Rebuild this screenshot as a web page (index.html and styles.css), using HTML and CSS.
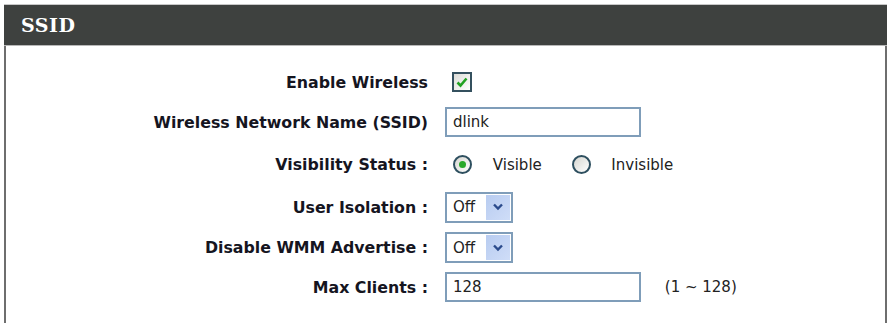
FILE: index.html
```html
<!DOCTYPE html>
<html lang="en">
<head>
    <meta charset="UTF-8">
    <title>Wireless Settings</title>
    <link rel="stylesheet" href="styles.css">
</head>
<body>
    <div class="box">
        <div class="box-title">SSID</div>
        <table class="settings">
            <tr class="row-check">
                <td class="label">Enable Wireless</td>
                <td class="field">
                    <span class="checkbox checked">
                        <svg width="12" height="11" viewBox="0 0 12 11"><path d="M1.5 5.5 L4.5 8.5 L10.5 1.5" fill="none" stroke="#21a121" stroke-width="2.6"/></svg>
                    </span>
                </td>
            </tr>
            <tr class="row-ssid">
                <td class="label">Wireless Network Name (SSID)</td>
                <td class="field"><span class="text-input">dlink</span></td>
            </tr>
            <tr class="row-radio">
                <td class="label">Visibility Status :</td>
                <td class="field">
                    <span class="radio on"><span class="dot"></span></span>
                    <span class="radio-label">Visible</span>
                    <span class="radio"></span>
                    <span class="radio-label">Invisible</span>
                </td>
            </tr>
            <tr class="row-select">
                <td class="label">User Isolation :</td>
                <td class="field">
                    <span class="select">Off<span class="arrow"><svg width="12" height="8" viewBox="0 0 12 8"><path d="M2 1.5 L6 5.5 L10 1.5" fill="none" stroke="#2b4b8c" stroke-width="2.4"/></svg></span></span>
                </td>
            </tr>
            <tr class="row-select2">
                <td class="label">Disable WMM Advertise :</td>
                <td class="field">
                    <span class="select">Off<span class="arrow"><svg width="12" height="8" viewBox="0 0 12 8"><path d="M2 1.5 L6 5.5 L10 1.5" fill="none" stroke="#2b4b8c" stroke-width="2.4"/></svg></span></span>
                </td>
            </tr>
            <tr class="row-max">
                <td class="label">Max Clients :</td>
                <td class="field">
                    <span class="text-input">128</span>
                    <span class="hint">(1 ~ 128)</span>
                </td>
            </tr>
        </table>
    </div>
</body>
</html>
```

FILE: styles.css
```css
body {
    margin: 0;
    padding: 4px 0 0 4px;
    background: #FFFFFF;
    font-family: "DejaVu Sans", Tahoma, sans-serif;
    width: 883px;
    overflow: hidden;
}
.box {
    border-left: 2px solid #6E6E6E;
    border-right: 2px solid #6E6E6E;
    height: 330px;
}
.box-title {
    background-color: #3E413F;
    border-top: 1px solid #C8C8C8;
    border-bottom: 1px solid #B8B8B8;
    margin-left: -2px;
    margin-right: -2px;
    height: 40px;
    line-height: 41px;
    padding-left: 17px;
    color: #FFFFFF;
    font-family: "DejaVu Serif", Georgia, serif;
    font-weight: bold;
    font-size: 19px;
    letter-spacing: 0.5px;
}
.settings {
    border-collapse: collapse;
    margin-top: 17px;
}
.settings td {
    padding: 0;
}
.label {
    width: 422px;
    text-align: right;
    font-weight: bold;
    font-size: 15.8px;
    color: #15151F;
    padding-right: 17px !important;
    white-space: nowrap;
}
.field {
    font-size: 15px;
    color: #222222;
}
.row-check td { height: 38px; }
.row-ssid td { height: 42px; }
.row-radio td { height: 43px; }
.row-select td { height: 42px; }
.row-select2 td { height: 39px; }
.row-max td { height: 40px; }
.field > * {
    vertical-align: middle;
}
.checkbox {
    display: inline-flex;
    align-items: center;
    justify-content: center;
    width: 16px;
    height: 16px;
    border: 2px solid #34505E;
    background: linear-gradient(to bottom right, #DCDCD7, #FFFFFF);
    margin-left: 7px;
}
.text-input {
    display: inline-block;
    box-sizing: border-box;
    width: 196px;
    height: 30px;
    line-height: 27px;
    border: 2px solid #7F9DB9;
    padding-left: 6px;
}
.radio {
    display: inline-flex;
    align-items: center;
    justify-content: center;
    box-sizing: border-box;
    width: 19px;
    height: 19px;
    border: 2px solid #2E4F5F;
    border-radius: 50%;
    background: linear-gradient(to bottom right, #D6D6D0, #FFFFFF);
    margin-left: 8px;
}
.radio .dot {
    width: 7px;
    height: 7px;
    border-radius: 50%;
    background: #29A829;
}
.radio-label {
    margin-left: 16px;
    margin-right: 17px;
}
.select {
    display: inline-flex;
    align-items: center;
    justify-content: space-between;
    box-sizing: border-box;
    width: 68px;
    height: 31px;
    border: 2px solid #7F9DB9;
    padding: 0 1px 0 6px;
}
.arrow {
    display: inline-flex;
    align-items: center;
    justify-content: center;
    width: 24px;
    height: 25px;
    background: linear-gradient(to bottom right, #B8CCF0, #CFDDF8);
}
.hint {
    margin-left: 19px;
}
```
